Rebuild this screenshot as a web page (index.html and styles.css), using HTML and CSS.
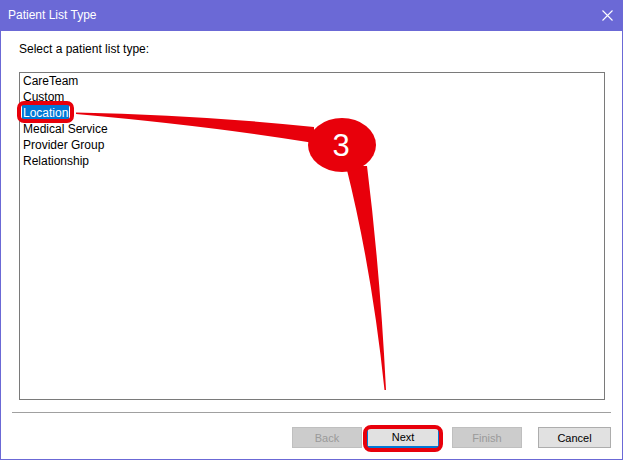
FILE: index.html
```html
<!DOCTYPE html>
<html>

<head>
    <title>Patient List Type</title>
    <meta charset="utf-8">
    <link rel="stylesheet" href="styles.css">
</head>

<body>
    <div class="stage">
        <div class="window">
            <div class="titlebar">
                <span class="title">Patient List Type</span>
                <svg class="close" width="11" height="11" viewBox="0 0 11 11">
                    <path d="M0.5 0.5 L10.5 10.5 M10.5 0.5 L0.5 10.5" stroke="#fff" stroke-width="1.1" fill="none"/>
                </svg>
            </div>

            <div class="content">
                <div class="prompt">Select a patient list type:</div>
                <div class="listbox">
                    <div class="item"><span>CareTeam</span></div>
                    <div class="item"><span>Custom</span></div>
                    <div class="item selected"><span>Location</span></div>
                    <div class="item"><span>Medical Service</span></div>
                    <div class="item"><span>Provider Group</span></div>
                    <div class="item"><span>Relationship</span></div>
                </div>
            </div>

            <div class="separator"></div>

            <div class="buttons">
                <button class="btn back" disabled>Back</button>
                <button class="btn next default">Next</button>
                <button class="btn finish" disabled>Finish</button>
                <button class="btn cancel">Cancel</button>
            </div>
        </div>

        <!-- annotation drawn over the dialog -->
        <svg class="annotation" width="623" height="460" viewBox="0 0 623 460">
            <rect x="19" y="103" width="53" height="18" rx="5" ry="5" fill="none" stroke="#e8000b" stroke-width="4"/>
            <path d="M76 112.5 Q 200 115 314 127 L 314 143 Q 210 126 76 114 Z" fill="#e8000b"/>
            <path d="M346 166 Q 372 270 384.5 390 L 386 390 Q 380 270 367 166 Z" fill="#e8000b"/>
            <ellipse cx="342" cy="145" rx="34" ry="27" fill="#e8000b"/>
            <text x="341" y="156" class="step">3</text>
            <rect x="365" y="427" width="76" height="23" rx="6" ry="6" fill="none" stroke="#e8000b" stroke-width="4"/>
        </svg>
    </div>
</body>

</html>
```

FILE: styles.css
```css
body {
    margin: 0;
    font-family: "Liberation Sans", Arial, sans-serif;
    font-size: 12px;
    color: #000;
}

.stage {
    position: relative;
    width: 623px;
    height: 460px;
}

.window {
    width: 623px;
    height: 460px;
    box-sizing: border-box;
    border: 1px solid #6b69d6;
    border-top: none;
    background: #fff;
    display: flex;
    flex-direction: column;
}

.titlebar {
    height: 31px;
    margin: 0 -1px;
    background: #6b69d6;
    display: flex;
    align-items: center;
    justify-content: space-between;
    padding: 0 10px 0 8px;
    color: #fff;
    flex-shrink: 0;
}

.title {
    font-size: 12px;
    line-height: 16px;
    padding-bottom: 1px;
}

.close {
    display: block;
}

.content {
    padding: 10px 0 0 18px;
}

.prompt {
    line-height: 16px;
    margin-bottom: 15px;
}

.listbox {
    width: 586px;
    height: 328px;
    box-sizing: border-box;
    border: 1px solid #7a7a7a;
    padding: 0 2px;
}

.item {
    height: 16px;
    line-height: 16px;
}

.item span {
    display: inline-block;
    padding: 0 1px;
}

.item.selected span {
    background: #0078d7;
    color: #fff;
}

.separator {
    margin: 12px 0 0 11px;
    width: 599px;
    height: 1px;
    background: #a0a0a0;
}

.buttons {
    display: flex;
    padding: 14px 0 0 291px;
}

.btn {
    height: 21px;
    box-sizing: border-box;
    font-family: "Liberation Sans", Arial, sans-serif;
    font-size: 11px;
    padding: 0;
    border: 1px solid #adadad;
    background: #e1e1e1;
    color: #000;
}

.btn:disabled {
    background: #cccccc;
    border-color: #bfbfbf;
    color: #9a9a9a;
}

.back {
    width: 70px;
}

.next {
    width: 72px;
    margin-left: 5px;
}

.default {
    border-color: #0078d7;
    border-width: 1px 1px 2px 1px;
}

.finish {
    width: 70px;
    margin-left: 13px;
}

.cancel {
    width: 73px;
    margin-left: 16px;
}

.annotation {
    position: absolute;
    left: 0;
    top: 0;
    pointer-events: none;
}

.step {
    font-family: "Liberation Sans", Arial, sans-serif;
    font-size: 31px;
    fill: #fff;
    text-anchor: middle;
}
```
